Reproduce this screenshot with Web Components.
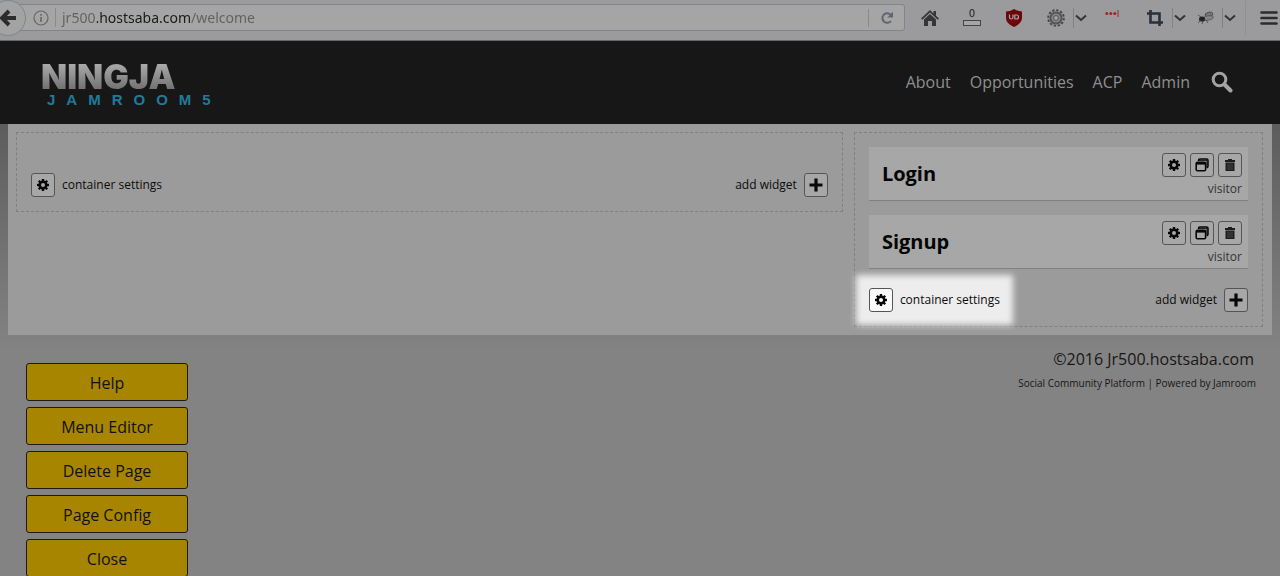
<!DOCTYPE html>
<html lang="en">
<head>
<meta charset="utf-8">
<title>Welcome - Jr500.hostsaba.com</title>
<style>
html { scrollbar-width: none; background: #838383; }
body { margin: 0; font-family: "Open Sans", "Noto Sans", sans-serif; color: #0c0c0c;
  background: linear-gradient(#5c5c5c 120px, #838383 350px); }
main { display: grid; grid-template-columns: 669fr 331fr; gap: 11px; align-items: start;
  margin: 0 8px; padding: 8px 9px 8px 8px; background: #9b9b9b; }
.page-foot { display: flex; justify-content: space-between; align-items: flex-start; padding: 0 24px 0 26px; }
</style>
</head>
<body>
<browser-bar></browser-bar>
<site-header>
  <a href="#about">About</a>
  <a href="#opportunities">Opportunities</a>
  <a href="#acp">ACP</a>
  <a href="#admin">Admin</a>
</site-header>
<main>
  <layout-container></layout-container>
  <layout-container highlight>
    <widget-card>Login</widget-card>
    <widget-card>Signup</widget-card>
  </layout-container>
</main>
<div class="page-foot">
  <page-actions></page-actions>
  <site-footer></site-footer>
</div>

<script>
const GEAR = `<svg width="14" height="14" viewBox="0 0 14 14" aria-hidden="true"><g fill="currentColor"><path d="M5.800 1h2.400v12h-2.400z"/><path d="M1 5.800h12v2.400h-12z"/><path d="M5.800 1h2.400v12h-2.400z" transform="rotate(45 7 7)"/><path d="M5.800 1h2.400v12h-2.400z" transform="rotate(-45 7 7)"/><circle cx="7" cy="7" r="4.500"/></g><circle cx="7" cy="7" r="2" fill="var(--tool-bg, #a7a7a7)"/></svg>`;
const COPIES = `<svg width="14" height="14" viewBox="0 0 14 14" fill="none" stroke="currentColor" aria-hidden="true"><path d="M3.500 3V2.300q0-1.300 1.300-1.300h6.900q1.300 0 1.300 1.300v5.900q0 1.300-1.300 1.500" stroke-width="1.500"/><path d="M3.500 2.300h8.500v7" stroke-width="1"/><rect x="1.200" y="4.200" width="9.400" height="8.600" rx="1.300" stroke-width="1.600"/><path d="M1.200 5.600h9.400" stroke-width="2"/></svg>`;
const TRASH = `<svg width="14" height="14" viewBox="0 0 14 14" aria-hidden="true"><path d="M2 2h3V1h4v1h3v2H2zM2.500 4.500h9V13h-9z" fill="#1d1d1d"/><path d="M5 5.500v6.500M7 5.500v6.500M9 5.500v6.500" stroke="#666" stroke-width=".6"/></svg>`;
const PLUS = `<svg width="14" height="14" viewBox="0 0 14 14" aria-hidden="true"><path d="M7 .5v13M.5 7h13" stroke="currentColor" stroke-width="3.200"/></svg>`;
const CHEVRON = `<svg width="12" height="8" viewBox="0 0 12 8" aria-hidden="true"><path d="M1 1.500l5 4.500 5-4.500" fill="none" stroke="#333" stroke-width="2"/></svg>`;

const TOOL_CSS = `
  .tool { box-sizing: border-box; width: 24px; height: 24px; padding: 0; display: grid; place-items: center;
    border: 1px solid #555; border-radius: 3px; background: var(--tool-bg, #a7a7a7); color: #080808; }
  .tool svg { display: block; }`;

function component(name, html) {
  const template = document.createElement("template");
  template.innerHTML = html;
  customElements.define(name, class extends HTMLElement {
    constructor() {
      super();
      this.attachShadow({ mode: "open" }).append(template.content.cloneNode(true));
    }
  });
}

component("browser-bar", `
<style>
  :host { display: flex; align-items: center; box-sizing: border-box; height: 41px; padding-bottom: 5px; background: #9b9b9d;
    border-bottom: 1px solid #66686b; overflow: hidden; }
  button { appearance: none; border: 0; padding: 0; background: none; display: grid; place-items: center; height: 30px; flex: none; }
  .back { position: relative; z-index: 1; width: 36px; height: 36px; margin-left: -10px; border: 1px solid #7e858c; border-radius: 50%; background: #a3a3a4; }
  .url { display: flex; align-items: center; flex: 1; box-sizing: border-box; height: 27px; margin-left: -8px; padding-left: 14px;
    border: 1px solid #7e858c; border-radius: 0 3px 3px 0; background: #a5a5a5; }
  .info { margin-right: 6px; }
  input { flex: 1; min-width: 0; box-sizing: border-box; height: 19px; border: 0; border-left: 1px solid #8a8a8a; margin: 0; padding: 0 0 0 6px; outline: 0;
    font: 14px/19px "Noto Sans", sans-serif; color: #5f5f5f; -webkit-text-fill-color: transparent;
    background: linear-gradient(90deg, #606060 41px, #17191b 41px 134px, #606060 134px); background-clip: text; -webkit-background-clip: text; }
  .reload { width: 36px; height: 18px; border-left: 1px solid #8a8a8a; }
  .wide { width: 42px; }
  .addons { display: flex; align-items: center; margin-left: 4px; }
  .mid { width: 35px; }
  .gap { margin-left: 3px; }
  .gap-wide { margin-left: 4px; }
  .drop { width: 15px; height: 20px; border-left: 1px solid #828284; }
  .menu { width: 35px; height: 34px; padding: 0 2px 0 13px; margin-left: 8px; border-left: 1px solid #8f8f91; }
  svg { display: block; }
  .count { font: 10px/10px "DejaVu Sans", sans-serif; color: #222; }
  .bar { width: 16px; height: 4px; border: 1px solid #444; margin-top: 1px; background: #a5a5a5; }
  .counter { align-content: center; justify-items: center; }
</style>
<button class="back" aria-label="Back"><svg width="20" height="20" viewBox="0 0 20 20"><path d="M11 3L4 10l7 7M5 10h13" fill="none" stroke="#2c2c2c" stroke-width="4"/></svg></button>
<div class="url">
  <svg class="info" width="16" height="16" viewBox="0 0 16 16"><circle cx="8" cy="8" r="7" fill="none" stroke="#666" stroke-width="1.200"/><path d="M8 7v5M8 4v1.800" stroke="#666" stroke-width="1.600"/></svg>
  <input type="text" aria-label="Address" value="jr500.hostsaba.com/welcome">
  <button class="reload" aria-label="Reload"><svg width="14" height="14" viewBox="0 0 14 14"><path d="M11 10A4.800 4.800 0 1 1 10.500 3.500" fill="none" stroke="#5c6670" stroke-width="2"/><path d="M13 .8v5.700H7.300z" fill="#5c6670"/></svg></button>
</div>
<div class="addons">
  <button class="wide" aria-label="Home"><svg width="18" height="16" viewBox="0 0 18 16"><path d="M9 0L0 8.500l1.300 1.300L9 2.600l7.700 7.200L18 8.500l-3-2.800V1h-2.500v2.400z" fill="#363636"/><path d="M3 9.500L9 4l6 5.500V16h-4v-5H7v5H3z" fill="#363636"/></svg></button>
  <button class="wide counter" aria-label="Counter"><span class="count">0</span><span class="bar"></span></button>
  <button class="wide" aria-label="Blocker"><svg width="16" height="18" viewBox="0 0 16 18"><path d="M8 0q4 2.500 8 2.500V9q0 5.500-8 9-8-3.500-8-9V2.500Q4 2.500 8 0z" fill="#6d0609"/><path d="M3.500 5.500v3q0 1.500 1.700 1.500T7 8.500V5.500" fill="none" stroke="#a5a5a5" stroke-width="1.200"/><path d="M8.800 6h1.700q2 0 2 2t-2 2H8.800z" fill="none" stroke="#a5a5a5" stroke-width="1.200"/></svg></button>
  <button class="mid gap" aria-label="Settings add-on"><svg width="18" height="18" viewBox="0 0 18 18"><circle cx="9" cy="9" r="7.800" fill="none" stroke="#484848" stroke-width="2" stroke-dasharray="2.400 1.680"/><circle cx="9" cy="9" r="5.600" fill="#858585" stroke="#555" stroke-width="2"/><circle cx="9" cy="9" r="2.400" fill="#a5a5a5" stroke="#555"/></svg></button>
  <button class="drop" aria-label="Settings menu">${CHEVRON}</button>
  <button class="wide gap" aria-label="Passwords"><svg width="14" height="18" viewBox="0 0 14 18"><g fill="#a02522"><circle cx="1.800" cy="4.500" r="1.500"/><circle cx="5.800" cy="4.500" r="1.500"/><circle cx="9.800" cy="4.500" r="1.500"/><path d="M12.500 1h1v7h-1z"/></g></svg></button>
  <button class="mid gap-wide" aria-label="Crop"><svg width="16" height="16" viewBox="0 0 16 16"><path d="M0 3.500h12.500V16M3.500 0v12.500H16" fill="none" stroke="#26323d" stroke-width="2.600"/></svg></button>
  <button class="drop" aria-label="Crop menu">${CHEVRON}</button>
  <button class="mid" aria-label="Debug"><svg width="18" height="16" viewBox="0 0 18 16"><ellipse cx="13" cy="4.500" rx="4" ry="2.200" transform="rotate(-15 13 4.500)" fill="#777" stroke="#444" stroke-width=".8"/><ellipse cx="12" cy="8" rx="5.500" ry="2.200" transform="rotate(-8 12 8)" fill="#858585" stroke="#555" stroke-width=".8"/><ellipse cx="6" cy="9" rx="3" ry="2.600" fill="#222"/><path d="M5 7L2 5M5 10l-3 3M7 11l-1 3M10 10l2 3" stroke="#444" fill="none" stroke-width=".8"/></svg></button>
  <button class="drop" aria-label="Debug menu">${CHEVRON}</button>
  <button class="menu" aria-label="Menu"><svg width="18" height="14" viewBox="0 0 18 14"><path d="M1.500 1.500h15M1.500 7h15M1.500 12.500h15" stroke="#2c2c2c" stroke-width="2.600" stroke-linecap="round"/></svg></button>
</div>`);

component("site-header", `
<style>
  :host { display: flex; align-items: center; justify-content: space-between; box-sizing: border-box; height: 83px;
    padding: 0 47px 2px 41px; background: #171717; }
  .logo { display: grid; gap: 2px; padding-top: 8px; text-decoration: none; justify-items: start; }
  .name { font: 900 34px/26px Inter, sans-serif; color: #8f8f8f; -webkit-text-fill-color: transparent;
    background: linear-gradient(#aaa, #707070); background-clip: text; -webkit-background-clip: text; }
  .sub { font: bold 15px/15px "Liberation Sans", sans-serif; letter-spacing: 11px; color: #217a9b; padding-left: 6px; }
  nav { display: flex; align-items: center; gap: 19px; }
  ::slotted(a) { font-size: 16px; line-height: 24px; color: #8f8f8f; text-decoration: none; }
  button { border: 0; padding: 0; margin-left: 2px; background: none; }
  svg { display: block; }
</style>
<a class="logo" href="#home"><span class="name">NINGJA</span><span class="sub">JAMROOM5</span></a>
<nav><slot></slot><button aria-label="Search"><svg width="22" height="22" viewBox="0 0 22 22"><circle cx="8.500" cy="8.500" r="6.300" fill="none" stroke="#a3a3a3" stroke-width="3"/><path d="M13.500 13.500l6 6" stroke="#a3a3a3" stroke-width="4" stroke-linecap="round"/></svg></button></nav>`);

component("layout-container", `
<style>
  :host { display: block; padding: 14px; border: 1px dashed #808080; }
  .widgets { display: grid; gap: 14px; min-height: 7px; }
  .bar { display: flex; align-items: center; justify-content: space-between; margin-top: 19px; font-size: 12px; line-height: 16px; }
  .item { position: relative; display: flex; align-items: center; gap: 7px; }
  :host([highlight]) .settings { --tool-bg: #fafafa; }
  :host([highlight]) .settings::before { content: ""; position: absolute; inset: -13px; background: #ededed; filter: blur(3px); }
  .settings > * { position: relative; }
  ${TOOL_CSS}
</style>
<div class="widgets"><slot></slot></div>
<div class="bar">
  <div class="item settings"><button class="tool" id="settings">${GEAR}</button><label for="settings">container settings</label></div>
  <div class="item"><label for="add">add widget</label><button class="tool" id="add">${PLUS}</button></div>
</div>`);

component("widget-card", `
<style>
  :host { display: flex; justify-content: space-between; align-items: center; box-sizing: border-box; height: 54px; padding: 0 6px 0 13px;
    background: #a7a7a7; border-bottom: 1px solid #808080; }
  h2 { margin: 0; font-size: 20px; line-height: 28px; font-weight: bold; color: #050505; }
  .side { display: grid; justify-items: end; font-size: 12px; line-height: 16px; color: #333; gap: 4px; padding-top: 2px; }
  .tools { display: flex; gap: 4px; }
  ${TOOL_CSS}
</style>
<h2><slot></slot></h2>
<div class="side">
  <div class="tools"><button class="tool" aria-label="Settings">${GEAR}</button><button class="tool" aria-label="Clone">${COPIES}</button><button class="tool" aria-label="Delete">${TRASH}</button></div>
  <span>visitor</span>
</div>`);

component("page-actions", `
<style>
  :host { display: grid; gap: 6px; width: 162px; margin-top: 28px; }
  button { height: 38px; padding: 1px 0 0; border: 1px solid #1c1a12; border-radius: 3px; background: #a78500; color: #111; font: inherit; font-size: 16px; }
</style>
<button>Help</button><button>Menu Editor</button><button>Delete Page</button><button>Page Config</button><button>Close</button>`);

component("site-footer", `
<style>
  :host { display: block; margin-top: 12px; text-align: right; color: #171717; }
  p { margin: 0; padding-right: 2px; font-size: 16px; line-height: 24px; }
  small { display: block; margin-top: 4px; font-size: 10px; line-height: 16px; }
  a { color: inherit; text-decoration: none; }
</style>
<p>©2016 Jr500.hostsaba.com</p>
<small>Social Community Platform | <a href="#jamroom">Powered by Jamroom</a></small>`);
</script>
</body>
</html>
